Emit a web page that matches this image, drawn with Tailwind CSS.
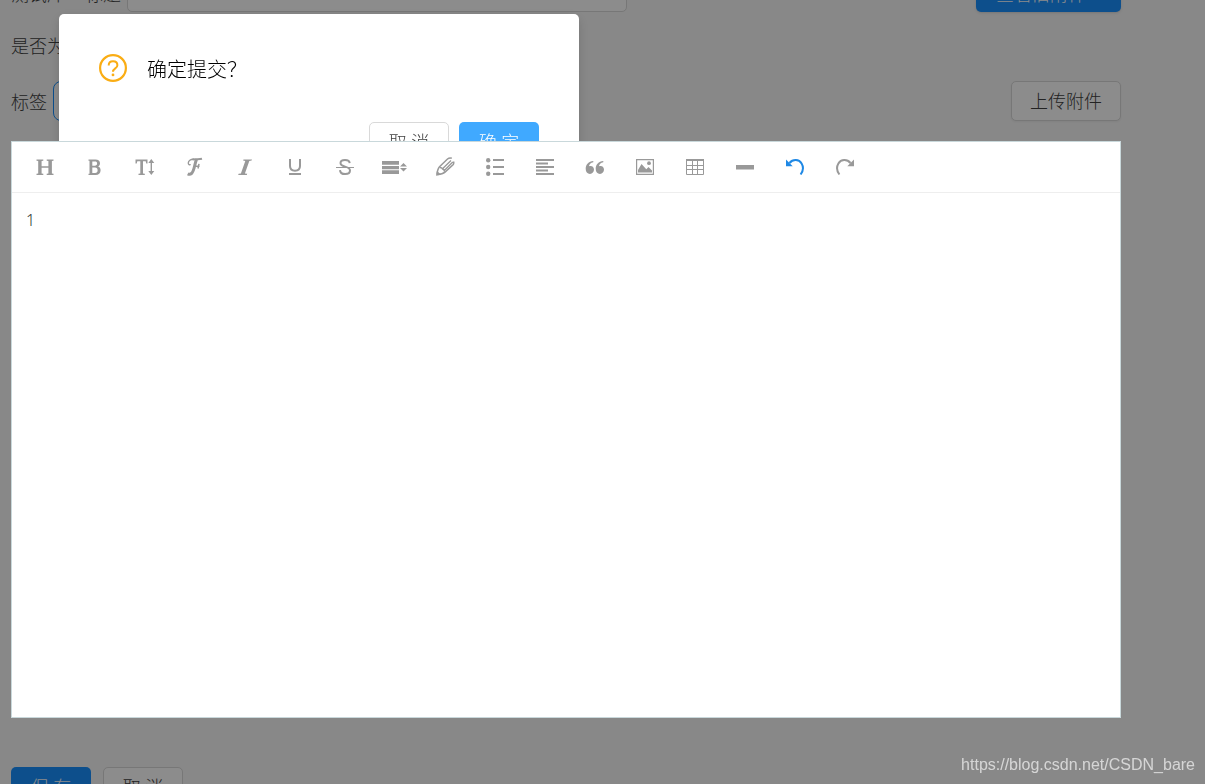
<!DOCTYPE html>
<html lang="zh">
<head>
<meta charset="utf-8">
<meta name="viewport" content="width=device-width, initial-scale=1">
<title>编辑</title>
<script src="https://cdn.jsdelivr.net/npm/@tailwindcss/browser@4"></script>
</head>
<body class="h-screen overflow-hidden bg-[#f7f7f7] font-['Noto_Sans','Noto_Sans_CJK_SC',sans-serif] text-lg font-light text-[#404040]">
<form class="-mt-7 pl-[11px] pr-[84px]">
  <div class="flex h-10 items-center justify-between">
    <div class="flex items-center">
      <label for="title" class="flex w-[116px] justify-between pr-[6px] pt-1"><span>测试库</span><span>标题</span></label>
      <input id="title" type="text" class="h-10 w-[500px] rounded-[5px] border border-[#d9d9d9] bg-white px-3">
    </div>
    <button type="button" class="h-10 w-[145px] rounded-[5px] bg-[#1890ff] px-5 pt-1 text-left text-white shadow-sm">查看旧附件</button>
  </div>
  <div class="mt-[20px] flex h-[27px] items-center">是否为公开</div>
  <div class="mt-[22px] flex h-10 items-center justify-between">
    <div class="flex items-center gap-[6px]">
      <label for="tag" class="pt-[2px]">标签</label>
      <input id="tag" type="text" class="h-10 w-[200px] rounded-[8px] border border-[#1890ff] bg-white px-3">
    </div>
    <button type="button" class="h-10 w-[110px] rounded-[5px] border border-[#d9d9d9] bg-white shadow-xs">上传附件</button>
  </div>

  <section class="relative z-30 mt-5 border border-[#c9d8db] bg-white">
    <div role="toolbar" class="flex h-[51px] items-center border-b border-[#eeeeee] pl-2 text-[#999999]">
      <button type="button" aria-label="标题" class="flex h-full w-[50px] items-center justify-center"><svg width="18" height="18" viewBox="0 0 18 18" fill="currentColor"><path d="M.5 1.500h6.800v1.200l-1.700.4V8.200h6.800V3.100l-1.700-.4V1.500h6.800v1.200l-1.600.4v12.300l1.600.4V17h-6.800v-1.200l1.700-.4V9.700H5.600v5.700l1.700.4V17H.5v-1.200l1.700-.4V3.100L.5 2.700z"/></svg></button>
      <button type="button" aria-label="粗体" class="flex h-full w-[50px] items-center justify-center"><svg width="18" height="18" viewBox="0 0 18 18" fill="currentColor" fill-rule="evenodd"><path d="M2.500 1.500h6.800c3.200 0 4.700 1.400 4.700 3.700 0 1.600-.7 2.700-1.900 3.300 1.600.5 2.500 1.800 2.500 3.700 0 3-1.900 4.800-5 4.800H2.500v-1.300h1V2.800h-1zM6.300 3.500v4.200h2.500c1.500 0 2.300-.8 2.300-2.200s-.7-2-2.200-2zM6.300 9.600V15h2.800c1.700 0 2.500-1 2.500-2.800s-.8-2.600-2.600-2.600z"/></svg></button>
      <button type="button" aria-label="字号" class="flex h-full w-[50px] items-center justify-center"><svg width="20" height="18" viewBox="0 0 20 18" fill="currentColor"><path d="M.5 1.500h12v4h-1.200l-.6-2.300H8V15.400l1.800.4V17H3.500v-1.200l1.800-.4V3.200H2.300L1.700 5.500H.5zM16.300 1l3 4H17v8h2.300l-3 4-3-4h2.300V5h-2.300z"/></svg></button>
      <button type="button" aria-label="字体" class="flex h-full w-[50px] items-center justify-center"><svg width="20" height="20" viewBox="0 0 20 20" fill="none" stroke="currentColor"><path d="M9 2.300C5.500 2 3.300 4 3.300 6c0 1.600 1.200 2.200 2.400 1.500" stroke-width="1.400"/><path d="M7.500 2.400c3-.6 6 .3 9.500-.6" stroke-width="2"/><path d="M9.500 9.200h5M14 6.800l-1 4.700" stroke-width="1.500"/><path d="M11.500 2.500C9.500 6.500 9.500 14 6.500 16.500c-1.200 1-2.800.8-3.800.3" stroke-width="3"/></svg></button>
      <button type="button" aria-label="斜体" class="flex h-full w-[50px] items-center justify-center"><svg width="18" height="18" viewBox="0 0 18 18" fill="currentColor"><path d="M7.500 1.500H16l-.4 1.100-2.300.4-4.400 12.400 2.300.4-.4 1.200H2.200l.4-1.200 2.300-.4L9.300 3l-2.200-.4z"/></svg></button>
      <button type="button" aria-label="下划线" class="flex h-full w-[50px] items-center justify-center"><svg width="18" height="18" viewBox="0 0 18 18" fill="none" stroke="currentColor" stroke-width="2"><path d="M4 1v7c0 3.200 1.700 4.700 5 4.700s5-1.500 5-4.700V1M3 16h12"/></svg></button>
      <button type="button" aria-label="删除线" class="flex h-full w-[50px] items-center justify-center"><svg width="18" height="18" viewBox="0 0 18 18" fill="none" stroke="currentColor"><path d="M13.700 5.200C13.500 3 11.800 1.900 9 1.900S4.500 3.200 4.500 5.100C4.500 9.800 14 7.500 14 12.600c0 2.200-1.900 3.500-4.800 3.500-3.200 0-5.100-1.500-5.200-4" stroke-width="2"/><path d="M0 9.500h18" stroke-width="1"/></svg></button>
      <button type="button" aria-label="行高" class="flex h-full w-[50px] items-center justify-center"><svg width="26" height="18" viewBox="0 0 26 18" fill="currentColor"><path d="M0 3h17v3.700H0zM0 8h17v3.200H0zM0 12.300h17V16H0zM21.500 5l3.500 3.500h-7zM21.500 13.500l3.500-3.500h-7z"/></svg></button>
      <button type="button" aria-label="画笔" class="flex h-full w-[50px] items-center justify-center"><svg width="20" height="20" viewBox="0 0 20 20" fill="none" stroke="currentColor" stroke-width="1.500"><path d="M2 17.500C2.300 14 3 11.500 4.500 9.800L12.500 2c1.300-1.100 3-1.300 4.300-.7M2.300 17.600c3.500-.3 6-1 7.700-2.500L18.300 7.500c.6-1 .6-2 .2-3"/><path d="M7.500 11.800L16 3.500M9.300 13.500l8.500-8.500M4.800 10.500c1.500 0 2.400.5 2.700 1.500 1.200.2 2 1.200 2 2.700" stroke-width="1.300"/><path d="M1 18.700l1-5 4 4z" fill="currentColor" stroke="none"/></svg></button>
      <button type="button" aria-label="列表" class="flex h-full w-[50px] items-center justify-center"><svg width="18" height="18" viewBox="0 0 18 18" fill="currentColor"><circle cx="2.200" cy="2.300" r="2.200"/><circle cx="2.200" cy="9" r="2.200"/><circle cx="2.200" cy="15.700" r="2.200"/><path d="M7 1h11v2H7zM7 8h11v2H7zM7 15h11v2H7z"/></svg></button>
      <button type="button" aria-label="对齐" class="flex h-full w-[50px] items-center justify-center"><svg width="18" height="18" viewBox="0 0 18 18" fill="currentColor"><path d="M0 1h18v2H0zM0 4.500h12v2H0zM0 8h18v2H0zM0 11.500h12v2H0zM0 15h18v2H0z"/></svg></button>
      <button type="button" aria-label="引用" class="flex h-full w-[50px] items-center justify-center"><svg width="20" height="18" viewBox="0 0 20 18" fill="currentColor"><path d="M8.300 3v1.200C5.600 4.700 4.100 6.200 4 8.300c.5-.3 1-.4 1.600-.4 2 0 3.400 1.500 3.400 3.700C9 14 7.300 16 5 16c-2.700 0-4.300-2-4.300-5.200C.7 6.500 3.600 3.400 8.300 3zM18.300 3v1.200c-2.700.5-4.200 2-4.300 4.100.5-.3 1-.4 1.600-.4 2 0 3.400 1.500 3.400 3.700 0 2.400-1.700 4.400-4 4.400-2.700 0-4.300-2-4.300-5.200 0-4.300 2.900-7.400 7.600-7.800z"/></svg></button>
      <button type="button" aria-label="图片" class="flex h-full w-[50px] items-center justify-center"><svg width="18" height="18" viewBox="0 0 18 18" fill="currentColor"><path d="M.6 1.600h16.800v14.800H.6z" fill="none" stroke="currentColor" stroke-width="1.200"/><circle cx="13" cy="5.200" r="1.900"/><path d="M2 14.500V12L5.500 6l4.800 5.200 2.200-2.200 3.500 3.500v2z"/></svg></button>
      <button type="button" aria-label="表格" class="flex h-full w-[50px] items-center justify-center"><svg width="18" height="18" viewBox="0 0 18 18" fill="none" stroke="currentColor"><path d="M.5 1.500h17v15H.5zM.5 7.500h17M.5 11.500h17M6.500 2v14M11.500 2v14"/><path d="M0 2h18" stroke-width="2"/></svg></button>
      <button type="button" aria-label="分隔线" class="flex h-full w-[50px] items-center justify-center"><svg width="18" height="18" viewBox="0 0 18 18" fill="currentColor"><path d="M0 7h18v4.500H0z"/></svg></button>
      <button type="button" aria-label="撤销" class="flex h-full w-[50px] items-center justify-center text-[#1e88e5]"><svg width="18" height="18" viewBox="0 0 18 18"><path d="M3.500 5C7 .8 13 1.200 15.600 5.500c2 3.400 1.600 7.500-1 11" fill="none" stroke="currentColor" stroke-width="2"/><path d="M0 1.500v6.700h6.700z" fill="currentColor"/></svg></button>
      <button type="button" aria-label="重做" class="flex h-full w-[50px] items-center justify-center"><svg width="18" height="18" viewBox="0 0 18 18"><path d="M14.500 5C11 .8 5 1.200 2.400 5.500c-2 3.400-1.600 7.500 1 11" fill="none" stroke="currentColor" stroke-width="2"/><path d="M18 1.500v6.700h-6.700z" fill="currentColor"/></svg></button>
    </div>
    <div contenteditable="true" role="textbox" aria-label="正文" class="h-[524px] px-[14px] py-[15px] text-base text-[#333333]">1</div>
  </section>

  <div class="mt-[49px] flex gap-3">
    <button type="submit" class="h-10 w-20 rounded-[5px] bg-[#1890ff] text-white">保 存</button>
    <button type="button" class="h-10 w-20 rounded-[5px] border border-[#d9d9d9] bg-white">取 消</button>
  </div>
</form>

<div class="fixed inset-0 z-10 bg-black/45"></div>

<div role="dialog" aria-labelledby="confirm" class="fixed left-[59px] top-[14px] z-20 w-[520px] rounded-[5px] bg-white px-10 pb-[30px] pt-10 shadow-[0_4px_12px_rgba(0,0,0,0.15)]">
  <div class="flex h-7 items-center gap-5">
    <svg width="28" height="28" viewBox="0 0 28 28" fill="none" stroke="#faad14" stroke-width="2.200"><circle cx="14" cy="14" r="12.900"/><path d="M9.700 11.500c0-2.700 1.700-4.200 4.300-4.200s4.400 1.500 4.400 3.900c0 3.300-4.400 3-4.400 6.600" stroke-width="2"/><circle cx="14" cy="20.900" r="1.400" fill="#faad14" stroke="none"/></svg>
    <h2 id="confirm" class="pt-1 text-xl font-light text-black">确定提交？</h2>
  </div>
  <div class="mt-10 flex justify-end gap-[10px]">
    <button type="button" class="h-10 w-20 rounded-[5px] border border-[#d9d9d9] bg-white">取 消</button>
    <button type="button" class="h-10 w-20 rounded-[5px] bg-[#40a9ff] text-white">确 定</button>
  </div>
</div>

<div class="fixed bottom-[7px] right-[10px] z-40 font-['Liberation_Sans',sans-serif] text-base font-normal text-white/65">https://blog.csdn.net/CSDN_bare</div>
</body>
</html>
